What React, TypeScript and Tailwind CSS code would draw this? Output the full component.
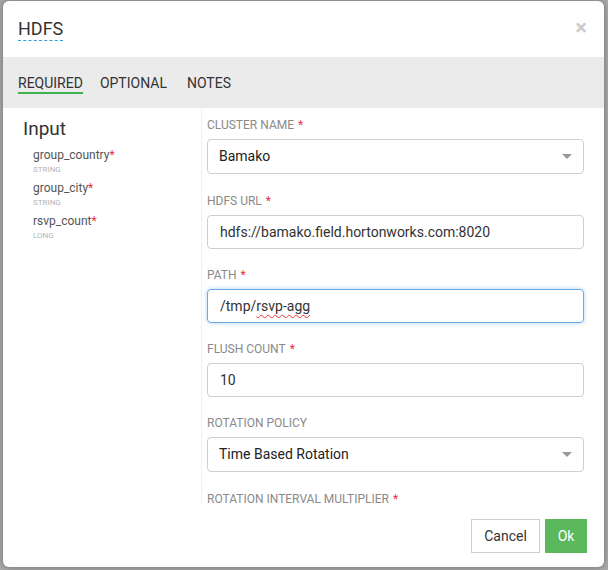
const font = { fontFamily: 'Roboto, "Liberation Sans", sans-serif' };

const inputs = [
  { name: 'group_country', type: 'STRING' },
  { name: 'group_city', type: 'STRING' },
  { name: 'rsvp_count', type: 'LONG' },
];

function Label({ text, required }: { text: string; required?: boolean }) {
  return (
    <div className="h-[16px] leading-[16px] mb-[6px] text-[12px] text-[#8a8a8a] uppercase whitespace-nowrap">
      {text}
      {required && <span className="text-[#e8304a] ml-[4px]">*</span>}
    </div>
  );
}

function Select({ value }: { value: string }) {
  return (
    <div className="h-[35px] border border-[#cfcfcf] rounded-[4px] flex items-center justify-between pl-[11px] pr-[11px] text-[14px] text-[#222]">
      <span>{value}</span>
      <span className="w-0 h-0 border-l-[5px] border-r-[5px] border-t-[5px] border-l-transparent border-r-transparent border-t-[#999]" />
    </div>
  );
}

function TextBox({ children, focused }: { children: React.ReactNode; focused?: boolean }) {
  return (
    <div
      className={`h-[34px] rounded-[4px] flex items-center pl-[12px] text-[14px] text-[#333] ${
        focused
          ? 'border border-[#66a9e6] shadow-[0_0_4px_rgba(102,169,230,0.5)]'
          : 'border border-[#cfcfcf]'
      }`}
    >
      {children}
    </div>
  );
}

export default function App() {
  return (
    <div className="w-[608px] h-[570px] bg-[#a9a9a9] overflow-hidden pl-[3px] pt-[1px]" style={font}>
      <div className="w-[601px] h-[566px] bg-white rounded-[6px] overflow-hidden flex flex-col shadow-[0_0_6px_rgba(0,0,0,0.35)]">
        {/* Header */}
        <div className="h-[56px] flex items-start justify-between pl-[15px] pr-[17px] pt-[17px]">
          <span className="text-[18px] leading-[22px] text-[#333] border-b border-dashed border-[#2b9be3]">HDFS</span>
          <span className="text-[22px] leading-[20px] font-bold text-[#cbcbcb]">×</span>
        </div>

        {/* Tabs */}
        <div className="h-[51px] bg-[#ebebeb] flex items-start pl-[15px] pt-[18px] gap-[17px] text-[14px] text-[#333]">
          <div className="border-b-2 border-[#3cb34f] pb-[1px] leading-[16px]">REQUIRED</div>
          <div className="leading-[16px]">OPTIONAL</div>
          <div className="leading-[16px] ml-[3px]">NOTES</div>
        </div>

        {/* Body */}
        <div className="h-[397px] flex">
          <div className="w-[199px] border-r border-[#f1f1f1] pl-[20px] pt-[10px]">
            <div className="text-[19px] leading-[22px] text-[#333] mb-[8px]">Input</div>
            <div className="pl-[10px] flex flex-col gap-[6px]">
              {inputs.map(i => (
                <div key={i.name}>
                  <div className="text-[12px] leading-[14px] text-[#555]">
                    {i.name}
                    <span className="text-[#e8304a]">*</span>
                  </div>
                  <div className="text-[8px] leading-[10px] text-[#b5b5b5] mt-[3px]">{i.type}</div>
                </div>
              ))}
            </div>
          </div>

          <div className="flex-1 pl-[5px] pr-[20px] pt-[9px] overflow-hidden">
            <div className="mb-[19px]">
              <Label text="Cluster Name" required />
              <Select value="Bamako" />
            </div>
            <div className="mb-[18px]">
              <Label text="HDFS URL" required />
              <TextBox>hdfs://bamako.field.hortonworks.com:8020</TextBox>
            </div>
            <div className="mb-[18px]">
              <Label text="Path" required />
              <TextBox focused>
                /tmp/
                <span className="underline decoration-wavy decoration-[#e33] decoration-1 underline-offset-[3px]">rsvp-agg</span>
              </TextBox>
            </div>
            <div className="mb-[18px]">
              <Label text="Flush Count" required />
              <TextBox>10</TextBox>
            </div>
            <div className="mb-[19px]">
              <Label text="Rotation Policy" />
              <Select value="Time Based Rotation" />
            </div>
            <div>
              <Label text="Rotation Interval Multiplier" required />
            </div>
          </div>
        </div>

        {/* Footer */}
        <div className="flex-1 flex justify-end items-start pt-[14px] pr-[17px] gap-[5px]">
          <button className="h-[34px] w-[69px] border border-[#cfcfcf] bg-white text-[14px] text-[#333]">Cancel</button>
          <button className="h-[34px] w-[42px] bg-[#5cb85c] text-[14px] text-white">Ok</button>
        </div>
      </div>
    </div>
  );
}
